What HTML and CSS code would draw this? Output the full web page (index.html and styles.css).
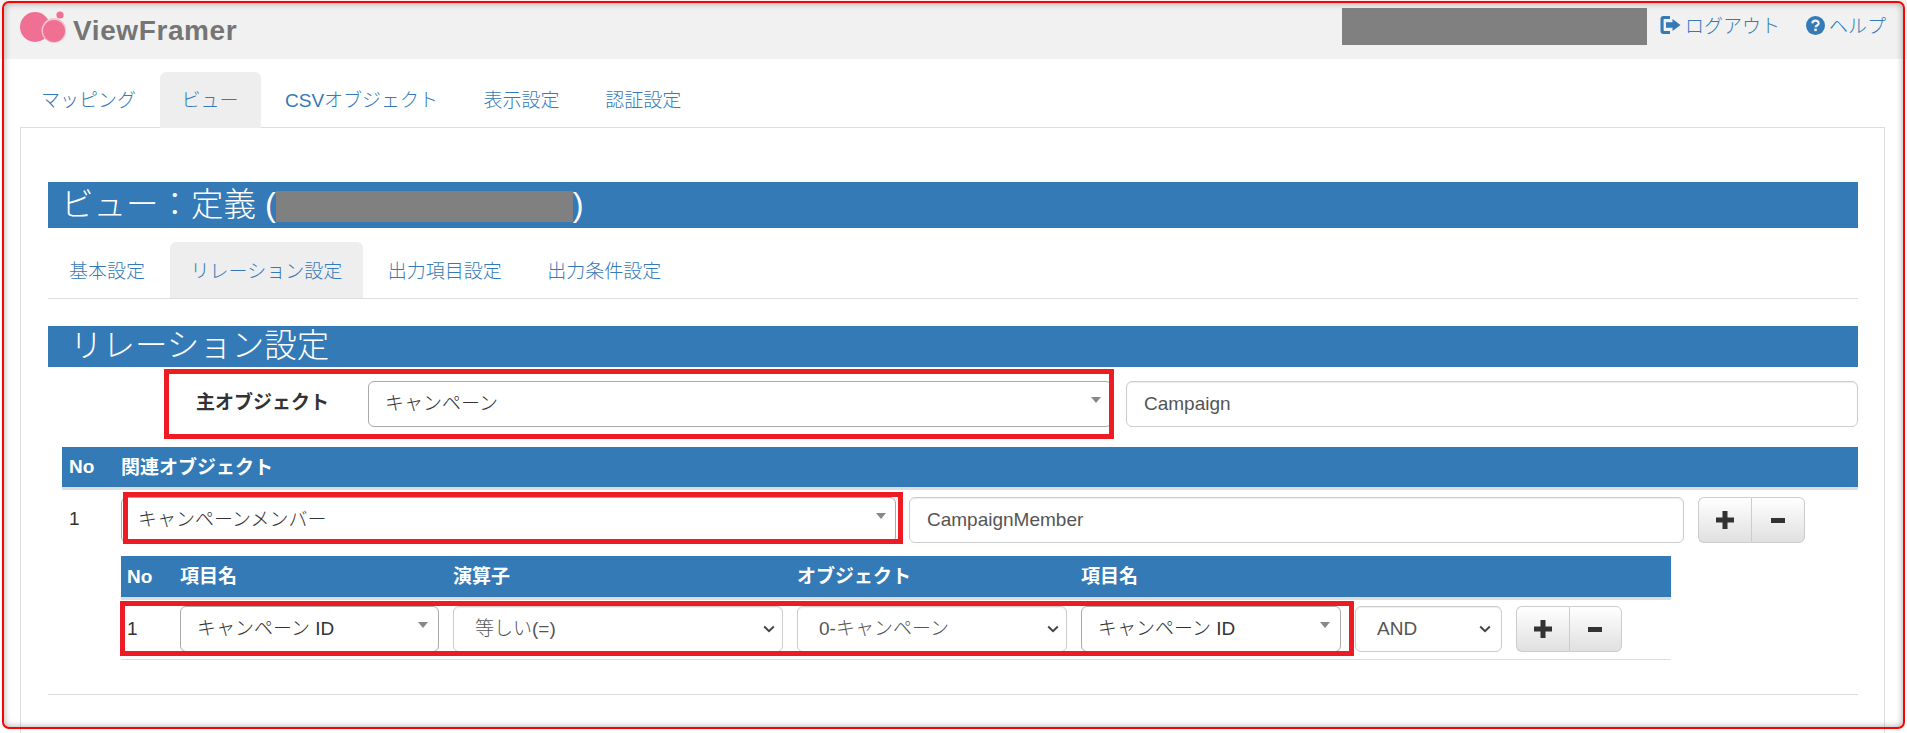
FILE: index.html
```html
<!DOCTYPE html>
<html lang="ja">
<head>
<meta charset="utf-8">
<title>ViewFramer</title>
<link rel="stylesheet" href="styles.css">
</head>
<body>
<div class="page">
  <header class="topbar">
    <div class="brand">
      <svg class="brand-mark" width="46" height="32" viewBox="0 0 46 32">
        <circle cx="15" cy="16" r="15" fill="#ef7093"/>
        <circle cx="34" cy="19.500" r="12.500" fill="#f6c3d1"/>
        <circle cx="34" cy="20" r="11" fill="#ef7093"/>
        <path d="M24 17.500a10.500 10.500 0 0 1 5-7l-3 10z" fill="#ef7093"/>
        <circle cx="40" cy="4" r="3.600" fill="#ef7093"/>
      </svg>
      <span class="brand-name">ViewFramer</span>
    </div>
    <div class="top-actions">
      <div class="redact-user"></div>
      <a class="top-link logout">
        <svg width="21" height="18" viewBox="0 0 21 18"><path d="M10 0H3.500A3 3 0 0 0 .5 3v12a3 3 0 0 0 3 3H10v-3H4.300a.7.7 0 0 1-.7-.7V3.700a.7.7 0 0 1 .7-.7H10z" fill="#337ab7"/><path d="M6 6.300h6.500V3L20.500 9l-8 6v-3.300H6z" fill="#337ab7"/></svg>
        <span>ログアウト</span>
      </a>
      <a class="top-link help">
        <svg width="19" height="19" viewBox="0 0 19 19"><circle cx="9.500" cy="9.500" r="9.500" fill="#337ab7"/><path d="M6.300 7.300c.2-1.800 1.500-2.700 3.200-2.700 1.900 0 3.200 1.100 3.200 2.600 0 2.300-3.100 2.200-3.100 4.100" fill="none" stroke="#f1f1f1" stroke-width="2.200"/><rect x="8.300" y="12.600" width="2.500" height="2.500" fill="#f1f1f1"/></svg>
        <span>ヘルプ</span>
      </a>
    </div>
  </header>

  <nav class="tabs main-tabs">
    <a class="tab">マッピング</a>
    <a class="tab active">ビュー</a>
    <a class="tab">CSVオブジェクト</a>
    <a class="tab">表示設定</a>
    <a class="tab">認証設定</a>
  </nav>

  <main class="pane">
    <h1 class="title-bar view-title">ビュー：定義 (<span class="redact-name"></span>)</h1>

    <nav class="tabs sub-tabs">
      <a class="tab">基本設定</a>
      <a class="tab active">リレーション設定</a>
      <a class="tab">出力項目設定</a>
      <a class="tab">出力条件設定</a>
    </nav>

    <h2 class="title-bar section-title">リレーション設定</h2>

    <div class="main-object">
      <label class="main-label">主オブジェクト</label>
      <div class="combo main-combo"><span>キャンペーン</span><i class="caret"></i></div>
      <input class="field main-field" value="Campaign">
    </div>

    <section class="relation">
      <div class="rel-head"><span class="rel-no">No</span><span>関連オブジェクト</span></div>
      <div class="rel-row">
        <span class="rel-no rel-num">1</span>
        <div class="combo rel-combo"><span>キャンペーンメンバー</span><i class="caret"></i></div>
        <input class="field rel-field" value="CampaignMember">
        <div class="btn-group">
          <button class="btn"><svg width="18" height="18" viewBox="0 0 18 18"><path d="M6.500 0h5v6.500H18v5h-6.500V18h-5v-6.500H0v-5h6.500z" fill="#333"/></svg></button>
          <button class="btn"><svg width="14" height="5" viewBox="0 0 14 5"><rect width="14" height="5" fill="#333"/></svg></button>
        </div>
      </div>

      <div class="cond">
        <div class="cond-grid cond-head">
          <span class="cond-no">No</span>
          <span>項目名</span>
          <span>演算子</span>
          <span>オブジェクト</span>
          <span>項目名</span>
        </div>
        <div class="cond-grid cond-row">
          <span class="cond-no cond-num">1</span>
          <div class="combo"><span>キャンペーン ID</span><i class="caret"></i></div>
          <div class="native"><select><option>等しい(=)</option></select><svg width="12" height="8" viewBox="0 0 12 8"><path d="M1.200 1.500 6 6.200l4.800-4.700" fill="none" stroke="#444" stroke-width="2"/></svg></div>
          <div class="native"><select><option>0-キャンペーン</option></select><svg width="12" height="8" viewBox="0 0 12 8"><path d="M1.200 1.500 6 6.200l4.800-4.700" fill="none" stroke="#444" stroke-width="2"/></svg></div>
          <div class="combo"><span>キャンペーン ID</span><i class="caret"></i></div>
          <div class="native native-and"><select><option>AND</option></select><svg width="12" height="8" viewBox="0 0 12 8"><path d="M1.200 1.500 6 6.200l4.800-4.700" fill="none" stroke="#444" stroke-width="2"/></svg></div>
          <div class="btn-group">
            <button class="btn"><svg width="18" height="18" viewBox="0 0 18 18"><path d="M6.500 0h5v6.500H18v5h-6.500V18h-5v-6.500H0v-5h6.500z" fill="#333"/></svg></button>
            <button class="btn"><svg width="14" height="5" viewBox="0 0 14 5"><rect width="14" height="5" fill="#333"/></svg></button>
          </div>
        </div>
      </div>
    </section>

    <hr class="rule">
  </main>

  <div class="mark mark-main"></div>
  <div class="mark mark-rel"></div>
  <div class="mark mark-cond"></div>
  <div class="frame"></div>
</div>
</body>
</html>
```

FILE: styles.css
```css
* { box-sizing: border-box; }
html, body { margin: 0; height: 100%; overflow: hidden; background: #fff; }
body {
  font-family: "Liberation Sans", "Noto Sans CJK JP", sans-serif;
  font-size: 19px;
  font-weight: 300;
  color: #333;
}
.page { position: relative; height: 733px; overflow: hidden; display: flex; flex-direction: column; }

/* header */
.topbar {
  flex: none; height: 59px; background: #f1f1f1;
  display: flex; justify-content: space-between; align-items: flex-start;
  padding: 0 21px 0 20px;
}
.brand { display: flex; align-items: center; height: 54px; gap: 7px; }
.brand-name { font-weight: 700; font-size: 28px; letter-spacing: .6px; color: #757575; padding-top: 7px; }
.top-actions { display: flex; align-items: flex-start; }
.redact-user { width: 305px; height: 37px; margin-top: 8px; margin-right: 13px; background: #808080; }
.top-link { display: flex; align-items: center; height: 34px; margin-top: 7px; color: #337ab7; }
.top-link svg { margin-top: 2px; }
.top-link.logout { gap: 4px; margin-right: 26px; }
.top-link.help { gap: 4px; }

/* tabs */
.tabs { display: flex; flex: none; }
.tab {
  display: flex; align-items: center; padding: 0 21px 3px; margin-right: 3.500px;
  color: #337ab7; border-radius: 6px 6px 0 0; white-space: nowrap;
}
.tab.active { background: #eee; }
.main-tabs { height: 56px; margin: 13px 0 -1px 20px; position: relative; z-index: 1; }
.main-tabs .tab:first-child { margin-right: 2.500px; }
.main-tabs .tab.active { padding-left: 22px; padding-right: 22px; }
.sub-tabs { height: 57px; margin-top: 14px; border-bottom: 1px solid #ddd; }
.sub-tabs .tab { padding-bottom: 2px; }

/* pane */
.pane {
  flex: none; height: 640px; margin: 0 22px 0 20px;
  padding: 54px 26px 0 27px;
  border: 1px solid #ddd;
}
.title-bar { margin: 0; background: #337ab7; color: #fff; font-weight: 300; font-size: 32.500px; white-space: nowrap; }
.view-title { height: 46px; line-height: 44px; padding-left: 13px; display: flex; align-items: center; }
.redact-name { width: 297px; height: 31px; margin-top: 2px; background: #808080; }
.section-title { height: 41px; line-height: 40px; margin-top: 27px; padding-left: 22px; }

/* main object row */
.main-object { display: flex; margin-top: 14px; height: 46px; }
.main-label { width: 320px; padding-left: 148px; font-weight: 700; line-height: 44px; white-space: nowrap; }
.main-combo { width: 744px; margin-right: 14px; }
.main-field { flex: 1; }

/* form controls */
.combo {
  position: relative; display: flex; align-items: center; height: 46px;
  padding: 0 16px 5px; background: #fff; border: 1px solid #aaa; border-radius: 6px;
  white-space: nowrap;
}
.caret {
  position: absolute; right: 10px; top: 15px; width: 0; height: 0;
  border-left: 5px solid transparent; border-right: 5px solid transparent; border-top: 6px solid #888;
}
.field {
  height: 46px; padding: 0 17px 0 17px; border: 1px solid #ccc; border-radius: 6px;
  font: inherit; font-weight: 400; color: #555; background: #fff; box-shadow: inset 0 1px 1px rgba(0,0,0,.07);
}
.native { position: relative; height: 46px; }
.native select {
  appearance: none; width: 100%; height: 100%; padding: 0 21px 2px; border: 1px solid #ccc; border-radius: 6px;
  font: inherit; color: #555; background: #fff; box-shadow: inset 0 1px 1px rgba(0,0,0,.07);
}
.native svg { position: absolute; right: 8px; top: 19px; }
.native-and svg { right: 11px; }

.btn-group { display: flex; width: 106px; height: 46px; }
.btn {
  flex: 1; display: flex; align-items: center; justify-content: center; padding: 0;
  border: 1px solid #ccc; background: linear-gradient(#fff, #e0e0e0);
}
.btn:first-child { border-radius: 6px 0 0 6px; border-right: 0; }
.btn:last-child { border-radius: 0 6px 6px 0; }

/* relation table */
.relation { margin-top: 20px; margin-left: 14px; }
.rel-head {
  display: flex; align-items: center; height: 43px; padding-bottom: 4px;
  background: #337ab7; border-bottom: 3px solid #ddd; color: #fff; font-weight: 700;
}
.rel-no { width: 59px; padding-left: 7px; flex: none; }
.rel-head .rel-no { padding-top: 4px; }
.rel-row { display: flex; align-items: flex-start; margin-top: 7px; }
.rel-row .btn-group { width: 107px; }
.rel-num { line-height: 44px; font-weight: 400; }
.rel-combo { width: 775px; margin-right: 13px; }
.rel-field { width: 775px; margin-right: 14px; }
.rel-row .caret { right: 9px; }

.cond { margin: 13px 0 0 59px; width: 1550px; }
.cond-grid {
  display: grid;
  grid-template-columns: 45px 259px 330px 270px 260px 147px 106px;
  column-gap: 14px;
}
.cond-head {
  height: 44px; align-items: center; padding-bottom: 4px;
  background: #337ab7; border-bottom: 3px solid #ddd; color: #fff; font-weight: 700; white-space: nowrap;
}
.cond-no { padding-left: 6px; }
.cond-head .cond-no { padding-top: 4px; }
.cond-num { line-height: 46px; font-weight: 400; }
.cond-row { padding: 6px 0 7px; border-bottom: 1px solid #ddd; }
.rule { margin: 34px 0 0; border: 0; border-top: 1px solid #ddd; }

/* annotations laid over the page */
.mark { position: absolute; border: 5px solid #ed1c24; pointer-events: none; }
.mark-main { left: 164px; top: 369px; width: 950px; height: 70px; }
.mark-rel { left: 123px; top: 492px; width: 780px; height: 52px; }
.mark-cond { left: 120px; top: 601px; width: 1234px; height: 55px; }
.frame {
  position: absolute; left: 2px; top: 1px; width: 1903px; height: 728px;
  border: 2px solid #f00; border-radius: 7px; pointer-events: none;
  box-shadow: inset 0 0 7px rgba(0,0,0,.35);
}
```
